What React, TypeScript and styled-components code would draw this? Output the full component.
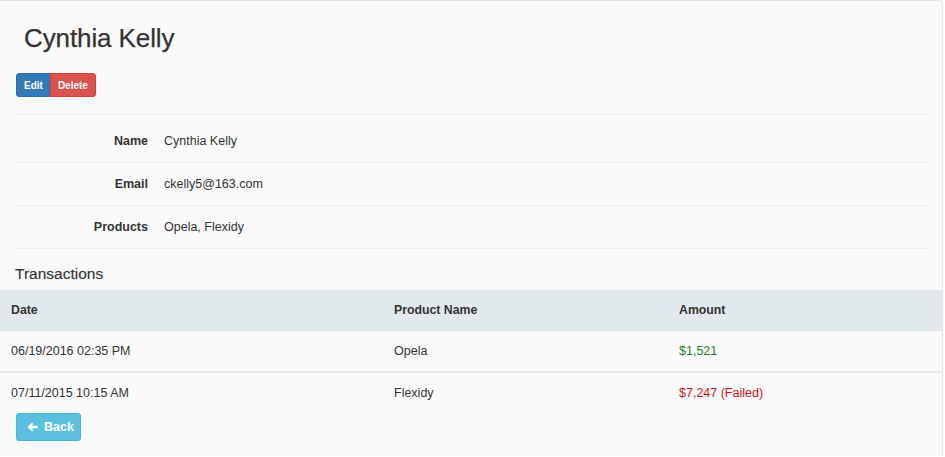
import React from "react";
import styled, { createGlobalStyle } from "styled-components";

const Global = createGlobalStyle`
  html, body { margin: 0; padding: 0; background: #ffffff; }
  body { font-family: "Liberation Sans", Arial, sans-serif; color: #333; }
`;

const Card = styled.div`
  width: 943px;
  min-height: 456px;
  box-sizing: border-box;
  background: #fafafa;
  border-top: 1px solid #e4e4e4;
  border-right: 1px solid #e4e4e4;
  border-top-right-radius: 4px;
  box-shadow: 1px 0 1px rgba(0, 0, 0, 0.03);
  display: flex;
  flex-direction: column;
`;

const Header = styled.div`
  padding: 0 14px 0 16px;
`;

const Title = styled.h1`
  margin: 22px 0 0 8px;
  font-size: 26px;
  line-height: 30px;
  font-weight: 400;
  color: #333;
  letter-spacing: -0.1px;
  -webkit-text-stroke: 0.25px #333;
`;

const ButtonGroup = styled.div`
  display: flex;
  margin-top: 20px;
`;

const SmallButton = styled.button<{ $variant: "primary" | "danger" }>`
  height: 24px;
  padding: 0 7px;
  font-family: "Liberation Sans", Arial, sans-serif;
  font-size: 10px;
  font-weight: 700;
  color: #fff;
  cursor: pointer;
  background: ${(p) => (p.$variant === "primary" ? "#337ab7" : "#d9534f")};
  border: 1px solid ${(p) => (p.$variant === "primary" ? "#2e6da4" : "#d43f3a")};
  border-radius: ${(p) => (p.$variant === "primary" ? "3px 0 0 3px" : "0 3px 3px 0")};
  margin-left: ${(p) => (p.$variant === "primary" ? "0" : "-1px")};
`;

const Rule = styled.div`
  height: 1px;
  background: #ececec;
  margin-top: 17px;
`;

const InfoList = styled.dl`
  margin: 5px 0 0 0;
`;

const InfoRow = styled.div`
  display: grid;
  grid-template-columns: 132px 1fr;
  column-gap: 16px;
  align-items: center;
  height: 42px;
  border-bottom: 1px solid #ececec;
`;

const Label = styled.dt`
  text-align: right;
  font-weight: 700;
  font-size: 12.5px;
  color: #333;
`;

const Value = styled.dd`
  margin: 0;
  font-size: 12.5px;
  color: #333;
`;

const SectionTitle = styled.h3`
  margin: 16px 0 0 15px;
  font-size: 15.5px;
  line-height: 18px;
  font-weight: 400;
  color: #333;
  -webkit-text-stroke: 0.15px #333;
`;

const Table = styled.div`
  margin-top: 7px;
  width: 942px;
`;

const TableRow = styled.div<{ $head?: boolean; $thick?: boolean }>`
  display: grid;
  grid-template-columns: 383px 285px 1fr;
  align-items: center;
  height: 40px;
  background: ${(p) => (p.$head ? "#e2e9ed" : "transparent")};
  border-bottom: ${(p) =>
    p.$head ? "1px solid #e0e4e6" : p.$thick ? "2px solid #e8e8e8" : "none"};
  font-size: ${(p) => (p.$head ? "12.3px" : "12.5px")};
  font-weight: ${(p) => (p.$head ? 700 : 400)};
`;

const Cell = styled.div`
  padding-left: 11px;
  color: #333;
`;

const Amount = styled.span<{ $status: "ok" | "failed" }>`
  color: ${(p) => (p.$status === "ok" ? "#2b7a2b" : "#d0111b")};
`;

const Footer = styled.div`
  padding: 0 16px;
`;

const BackButton = styled.button`
  display: inline-flex;
  align-items: center;
  gap: 6px;
  height: 28px;
  width: 65px;
  padding: 0 0 0 10px;
  box-sizing: border-box;
  background: #5bc0de;
  border: 1px solid #46b8da;
  border-radius: 3px;
  color: #fff;
  font-family: "Liberation Sans", Arial, sans-serif;
  font-size: 12.5px;
  font-weight: 700;
  cursor: pointer;
`;

const ArrowLeft = () => (
  <svg width="11" height="10" viewBox="0 0 11 10" aria-hidden="true">
    <path d="M0.3 5 L5 0.6 L6.4 2 L4.2 3.7 H10.7 V6.3 H4.2 L6.4 8 L5 9.4 Z" fill="#fff" />
  </svg>
);

const info = [
  { label: "Name", value: "Cynthia Kelly" },
  { label: "Email", value: "ckelly5@163.com" },
  { label: "Products", value: "Opela, Flexidy" },
];

const transactions = [
  { date: "06/19/2016 02:35 PM", product: "Opela", amount: "$1,521", status: "ok" as const },
  { date: "07/11/2015 10:15 AM", product: "Flexidy", amount: "$7,247 (Failed)", status: "failed" as const },
];

export default function App() {
  return (
    <>
      <Global />
      <Card>
        <Header>
          <Title>Cynthia Kelly</Title>
          <ButtonGroup>
            <SmallButton $variant="primary">Edit</SmallButton>
            <SmallButton $variant="danger">Delete</SmallButton>
          </ButtonGroup>
          <Rule />
          <InfoList>
            {info.map((r) => (
              <InfoRow key={r.label}>
                <Label>{r.label}</Label>
                <Value>{r.value}</Value>
              </InfoRow>
            ))}
          </InfoList>
        </Header>
        <SectionTitle>Transactions</SectionTitle>
        <Table>
          <TableRow $head>
            <Cell>Date</Cell>
            <Cell>Product Name</Cell>
            <Cell>Amount</Cell>
          </TableRow>
          {transactions.map((t, i) => (
            <TableRow key={t.date} $thick={i < transactions.length - 1}>
              <Cell>{t.date}</Cell>
              <Cell>{t.product}</Cell>
              <Cell>
                <Amount $status={t.status}>{t.amount}</Amount>
              </Cell>
            </TableRow>
          ))}
        </Table>
        <Footer>
          <BackButton>
            <ArrowLeft />
            Back
          </BackButton>
        </Footer>
      </Card>
    </>
  );
}
